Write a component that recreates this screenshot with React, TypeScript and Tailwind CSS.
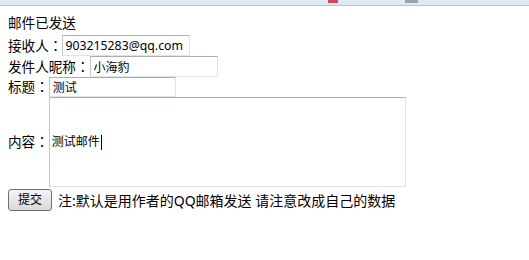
export default function App() {
  const font = { fontFamily: '"Noto Sans", "Noto Sans CJK SC", sans-serif' };
  const colon = <span className="[font-family:'Noto_Sans_CJK_JP',sans-serif]">：</span>;
  return (
    <div className="h-[260px] w-[529px] overflow-hidden bg-white text-[13.6px] text-black" style={font}>
      {/* browser chrome edge */}
      <div className="flex h-[6px] items-start border-b border-[#b4c4d6] bg-[#dfe9f5]">
        <div className="ml-[328px] h-[3px] w-[10px] bg-[#d24a66]" />
        <div className="ml-[67px] h-[3px] w-[13px] bg-[#9aa3ad]" />
      </div>

      <div className="pl-[8px]">
        <div className="flex h-[29px] items-center pt-[6px]">邮件已发送</div>

        <div className="flex h-[21px] items-center">
          <span>接收人{colon}</span>
          <input
            readOnly
            value="903215283@qq.com"
            className="h-[21px] w-[128px] border border-[#dfe3e9] border-t-[#abadb3] border-l-[#c4c8ce] px-[2px] text-[12.3px] outline-none"
          />
        </div>

        <div className="flex h-[21px] items-center">
          <span>发件人昵称{colon}</span>
          <input
            readOnly
            value="小海豹"
            className="h-[21px] w-[128px] border border-[#dfe3e9] border-t-[#abadb3] border-l-[#c4c8ce] px-[3px] text-[12px] outline-none"
          />
        </div>

        <div className="flex h-[20px] items-center">
          <span>标题{colon}</span>
          <input
            readOnly
            value="测试"
            className="h-[20px] w-[127px] border border-[#dfe3e9] border-t-[#abadb3] border-l-[#c4c8ce] px-[3px] text-[12px] outline-none"
          />
        </div>

        <div className="flex h-[90px] items-center">
          <span>内容{colon}</span>
          <div className="flex h-[90px] w-[357px] items-center border border-[#dfe3e9] border-t-[#abadb3] border-l-[#c4c8ce] px-[2px] text-[12px]">
            测试邮件
            <span className="ml-[1px] inline-block h-[15px] w-[1px] bg-black" />
          </div>
        </div>

        <div className="mt-[2px] flex h-[22px] items-center gap-[6px]">
          <button
            type="button"
            className="h-[22px] w-[44px] rounded-[3px] border border-[#707070] bg-gradient-to-b from-[#f4f4f4] to-[#d9d9d9] text-[12px] leading-none"
          >
            提交
          </button>
          <span className="text-[14px]">注:默认是用作者的QQ邮箱发送 请注意改成自己的数据</span>
        </div>
      </div>
    </div>
  );
}
